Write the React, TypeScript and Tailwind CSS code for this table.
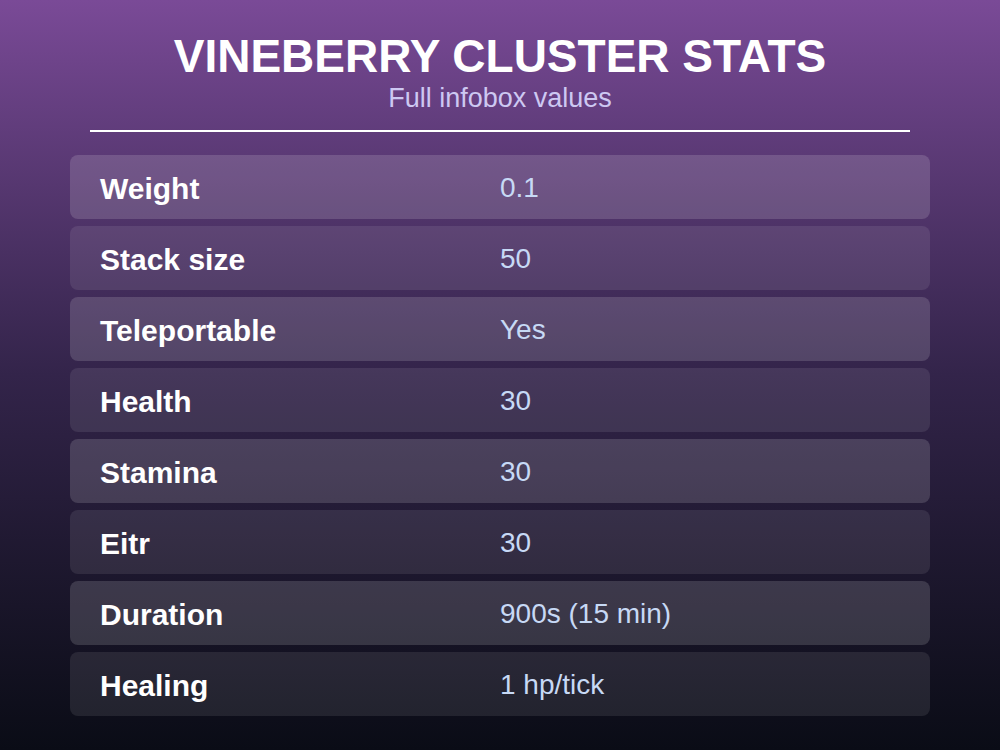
const rows: [string, string][] = [
  ["Weight", "0.1"],
  ["Stack size", "50"],
  ["Teleportable", "Yes"],
  ["Health", "30"],
  ["Stamina", "30"],
  ["Eitr", "30"],
  ["Duration", "900s (15 min)"],
  ["Healing", "1 hp/tick"],
];

export default function App() {
  return (
    <div
      className="flex h-[750px] w-[1000px] flex-col items-center bg-gradient-to-b from-[#7a4a97] via-[#33244a] to-[#0a0c16] font-['Liberation_Sans',Arial,sans-serif]"
    >
      {/* header */}
      <h1 className="mt-[28px] text-[46px] font-bold leading-[56px] text-white">
        VINEBERRY CLUSTER STATS
      </h1>
      <p className="text-[27px] leading-[28px] text-[#cdc8f2]">Full infobox values</p>
      <div className="mt-[18px] h-[2px] w-[820px] bg-white" />

      {/* stat rows */}
      <div className="mt-[23px] flex w-[860px] flex-col gap-[7px]">
        {rows.map(([label, value], i) => (
          <div
            key={label}
            className={`flex h-[64px] items-center rounded-[8px] px-[30px] pt-[2px] ${
              i % 2 === 0 ? "bg-white/[0.15]" : "bg-white/[0.09]"
            }`}
          >
            <span className="w-[400px] text-[30px] font-bold text-white">{label}</span>
            <span className="text-[28px] text-[#c7d9f5]">{value}</span>
          </div>
        ))}
      </div>
    </div>
  );
}
